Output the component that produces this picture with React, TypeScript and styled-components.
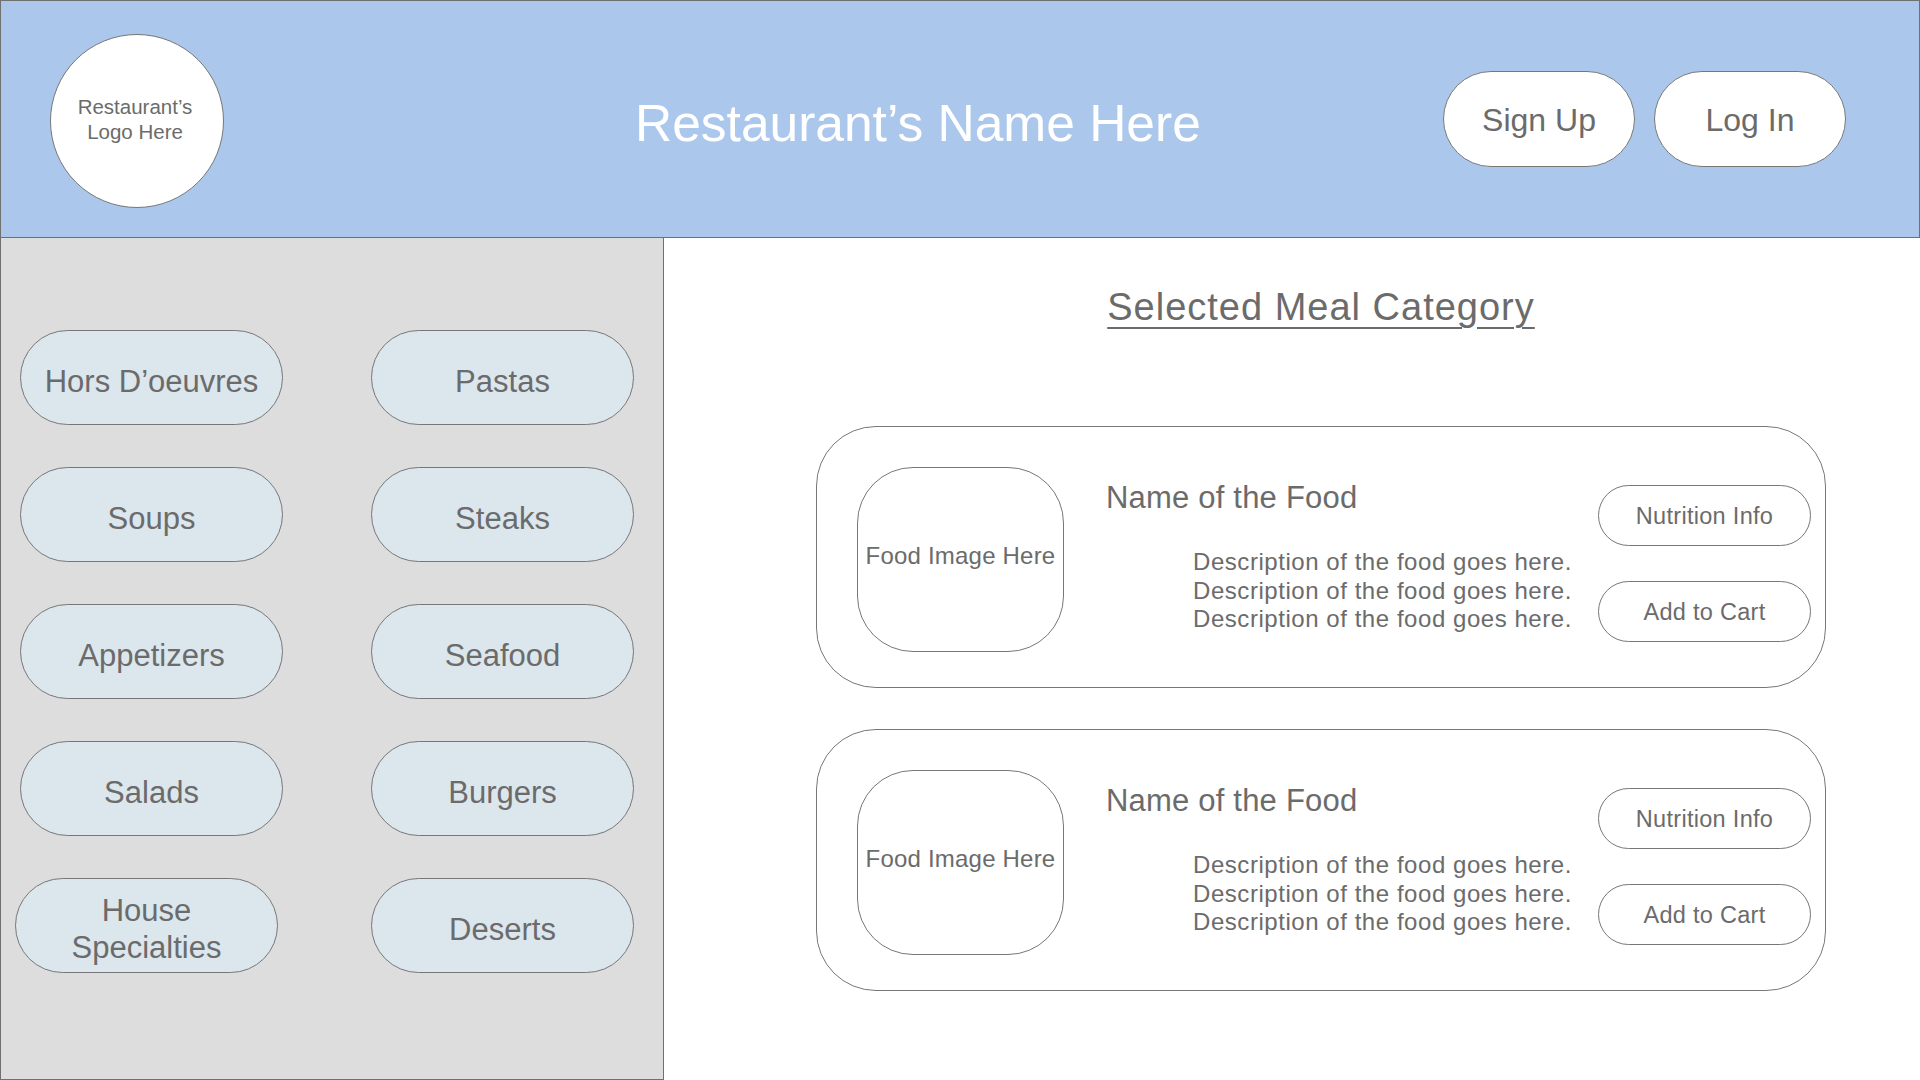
import React from "react";
import styled, { createGlobalStyle } from "styled-components";

const GlobalStyle = createGlobalStyle`
  html, body {
    margin: 0;
    padding: 0;
    background: #ffffff;
  }
  body {
    font-family: "Liberation Sans", Arial, Helvetica, sans-serif;
    color: #6b6b6b;
  }
  * { box-sizing: border-box; }
`;

const Page = styled.div`
  width: 1920px;
  height: 1080px;
  overflow: hidden;
  display: flex;
  flex-direction: column;
  background: #ffffff;
`;

const Header = styled.header`
  height: 238px;
  flex: 0 0 238px;
  display: flex;
  align-items: center;
  padding: 0 73px 0 49px;
  background: #abc8ec;
  border: 1px solid #707070;
`;

const Logo = styled.div`
  width: 174px;
  height: 174px;
  flex: 0 0 174px;
  border-radius: 50%;
  background: #ffffff;
  border: 1px solid #777777;
  display: flex;
  align-items: center;
  justify-content: center;
  text-align: center;
  font-size: 20.5px;
  line-height: 25px;
  color: #6b6b6b;
  margin-top: 3px;
  padding: 0 4px 4px 0;
`;

const Title = styled.h1`
  margin: 7px 0 0 411px;
  font-size: 51.5px;
  font-weight: 400;
  color: #ffffff;
  line-height: 60px;
  white-space: nowrap;
  flex: 1;
`;

const AuthGroup = styled.div`
  display: flex;
  gap: 19px;
`;

const AuthButton = styled.button`
  width: 192px;
  height: 96px;
  border-radius: 48px;
  background: #ffffff;
  border: 1px solid #777777;
  font-family: inherit;
  font-size: 32px;
  color: #6b6b6b;
  padding: 2px 0 0;
  cursor: pointer;
`;

const Body = styled.div`
  flex: 1;
  display: flex;
  min-height: 0;
`;

const Sidebar = styled.aside`
  width: 664px;
  flex: 0 0 664px;
  background: #dddddd;
  border-left: 1px solid #707070;
  border-right: 1px solid #707070;
  border-bottom: 1px solid #707070;
  padding: 92px 0 0 19px;
`;

const CategoryGrid = styled.div`
  display: grid;
  grid-template-columns: 263px 263px;
  column-gap: 88px;
  row-gap: 42px;
`;

const CategoryButton = styled.button<{ $shift?: number }>`
  width: 263px;
  height: 95px;
  border-radius: 48px;
  background: #dce6ed;
  border: 1px solid #777777;
  font-family: inherit;
  font-size: 31px;
  line-height: 37px;
  color: #6b6b6b;
  padding: 7px 0 0;
  margin-left: ${(p) => p.$shift ?? 0}px;
  cursor: pointer;
`;

const Main = styled.main`
  flex: 1;
  padding: 47px 0 0 152px;
`;

const Column = styled.div`
  width: 1010px;
  display: flex;
  flex-direction: column;
`;

const SectionTitle = styled.h2`
  margin: 0 0 97px;
  text-align: center;
  font-size: 38px;
  letter-spacing: 1px;
  line-height: 44px;
  font-weight: 400;
  color: #6b6b6b;
  text-decoration: underline;
  text-decoration-thickness: 2px;
  text-underline-offset: 7px;
`;

const CardList = styled.div`
  display: flex;
  flex-direction: column;
  gap: 41px;
`;

const Card = styled.div`
  height: 262px;
  border: 1px solid #777777;
  border-radius: 60px;
  display: flex;
  align-items: flex-start;
  padding: 0 14px 0 40px;
`;

const ImageBox = styled.div`
  width: 207px;
  height: 185px;
  flex: 0 0 207px;
  margin-top: 40px;
  border: 1px solid #777777;
  border-radius: 56px;
  display: flex;
  align-items: center;
  justify-content: center;
  font-size: 24px;
  letter-spacing: 0.2px;
  color: #6b6b6b;
  white-space: nowrap;
  padding-bottom: 8px;
`;

const Info = styled.div`
  flex: 1;
  padding: 53px 0 0 42px;
`;

const FoodName = styled.div`
  font-size: 31px;
  line-height: 36px;
  letter-spacing: 0.2px;
  color: #6b6b6b;
`;

const Description = styled.div`
  margin-top: 32px;
  padding-left: 87px;
  font-size: 24px;
  letter-spacing: 0.55px;
  line-height: 28.7px;
  color: #6b6b6b;
`;

const Actions = styled.div`
  width: 213px;
  flex: 0 0 213px;
  padding-top: 58px;
  display: flex;
  flex-direction: column;
  gap: 35px;
`;

const ActionButton = styled.button`
  width: 213px;
  height: 61px;
  border-radius: 31px;
  background: #ffffff;
  border: 1px solid #777777;
  font-family: inherit;
  font-size: 23.5px;
  letter-spacing: 0.3px;
  color: #6b6b6b;
  padding: 2px 0 0;
  cursor: pointer;
`;

const categories: { label: React.ReactNode; shift?: number }[] = [
  { label: "Hors D\u2019oeuvres" },
  { label: "Pastas" },
  { label: "Soups" },
  { label: "Steaks" },
  { label: "Appetizers" },
  { label: "Seafood" },
  { label: "Salads" },
  { label: "Burgers" },
  {
    label: (
      <>
        House
        <br />
        Specialties
      </>
    ),
    shift: -5,
  },
  { label: "Deserts" },
];

const foods = [1, 2];

export default function App() {
  return (
    <Page>
      <GlobalStyle />
      <Header>
        <Logo>
          Restaurant’s
          <br />
          Logo Here
        </Logo>
        <Title>Restaurant’s Name Here</Title>
        <AuthGroup>
          <AuthButton>Sign Up</AuthButton>
          <AuthButton>Log In</AuthButton>
        </AuthGroup>
      </Header>
      <Body>
        <Sidebar>
          <CategoryGrid>
            {categories.map((c, i) => (
              <CategoryButton key={i} $shift={c.shift}>
                {c.label}
              </CategoryButton>
            ))}
          </CategoryGrid>
        </Sidebar>
        <Main>
          <Column>
            <SectionTitle>Selected Meal Category</SectionTitle>
            <CardList>
              {foods.map((f) => (
                <Card key={f}>
                  <ImageBox>Food Image Here</ImageBox>
                  <Info>
                    <FoodName>Name of the Food</FoodName>
                    <Description>
                      Description of the food goes here.
                      <br />
                      Description of the food goes here.
                      <br />
                      Description of the food goes here.
                    </Description>
                  </Info>
                  <Actions>
                    <ActionButton>Nutrition Info</ActionButton>
                    <ActionButton>Add to Cart</ActionButton>
                  </Actions>
                </Card>
              ))}
            </CardList>
          </Column>
        </Main>
      </Body>
    </Page>
  );
}
